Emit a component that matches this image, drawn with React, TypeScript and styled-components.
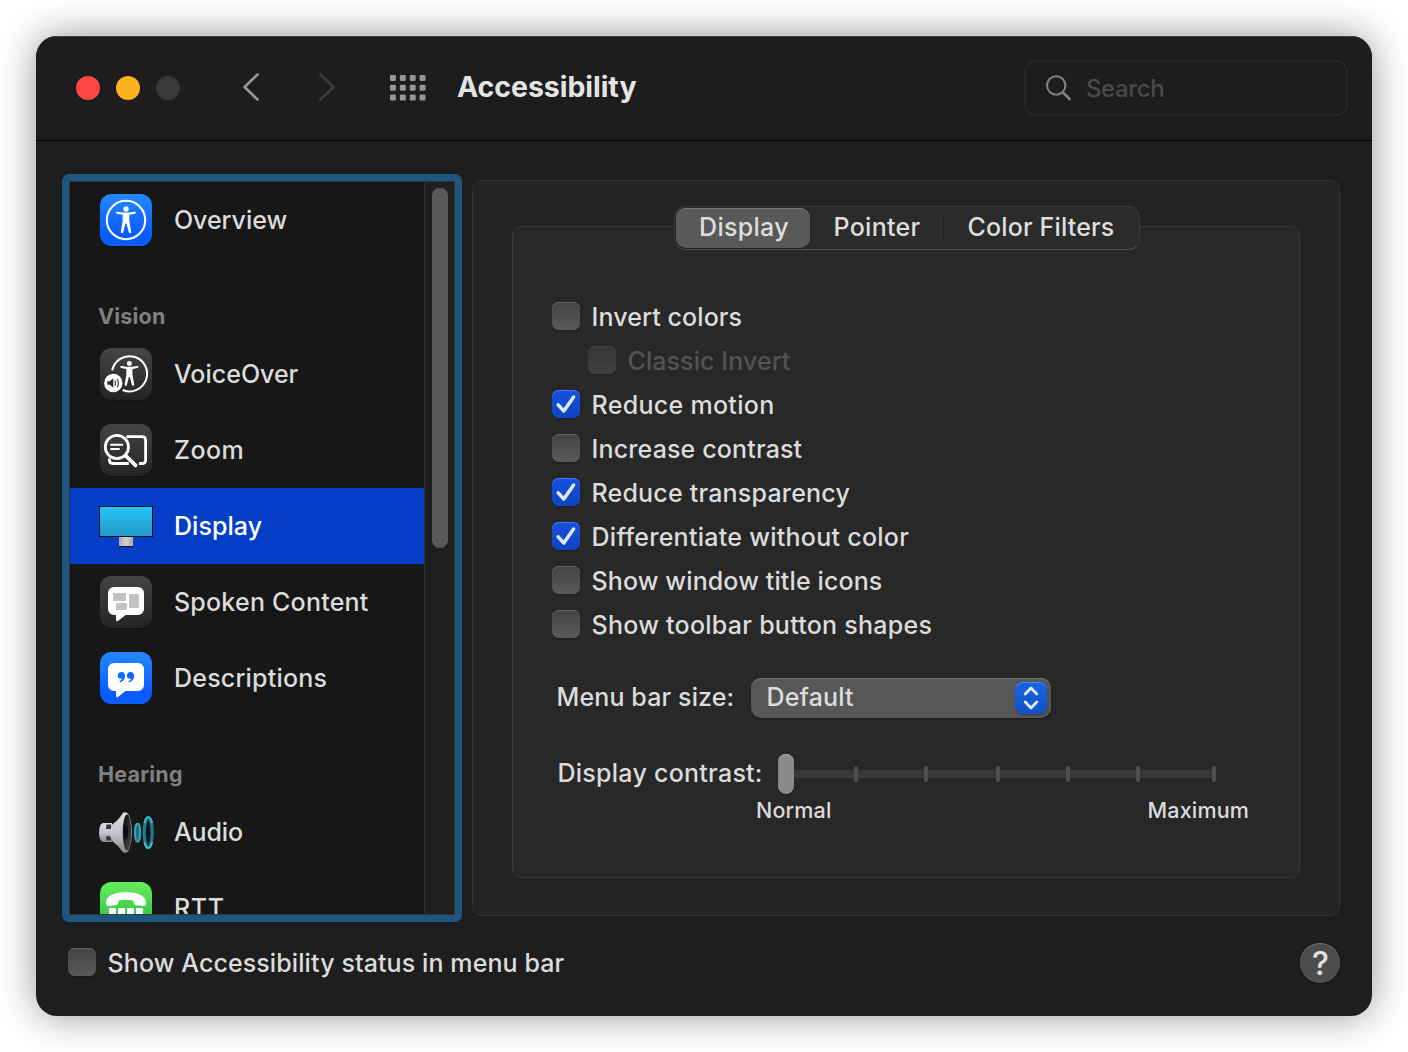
import React, { useState } from "react";
import styled, { createGlobalStyle, css } from "styled-components";

const Global = createGlobalStyle`
  * { box-sizing: border-box; }
  body { margin: 0; background: #fff; }
`;

const Desktop = styled.div`
  width: 1408px;
  height: 1052px;
  padding: 36px;
  overflow: hidden;
  background: #fff;
  font-family: Inter, "Liberation Sans", sans-serif;
  font-size: 25px;
  font-weight: 460;
  line-height: 30px;
  color: #dcdcdc;
`;

const Window = styled.main`
  display: flex;
  flex-direction: column;
  height: 980px;
  border-radius: 21px;
  overflow: hidden;
  background: #1e1e1e;
`;

const WindowShadow = styled.div`
  border-radius: 21px;
  box-shadow: 0 0 38px rgba(0, 0, 0, 0.42);
`;

/* ---------- toolbar ---------- */

const Toolbar = styled.header`
  display: flex;
  align-items: center;
  flex: none;
  height: 105px;
  padding: 0 24px 1px 40px;
  border-bottom: 1px solid #000;
  box-shadow: inset 0 1px 0 #404040;
  background: #1d1d1d;
`;

const Lights = styled.div`
  display: flex;
  gap: 16px;
`;

const Light = styled.span<{ $color: string }>`
  width: 24px;
  height: 24px;
  border-radius: 50%;
  background: ${(p) => p.$color};
`;

const NavButtons = styled.nav`
  display: flex;
  gap: 60px;
  margin: 0 55px 2px 63px;
`;

const Icon = styled.svg`
  display: block;
  flex: none;
  overflow: visible;
`;

const Title = styled.h1`
  flex: 1;
  margin: 0 0 1px 31px;
  font-size: 28.5px;
  font-weight: 700;
  letter-spacing: -0.05px;
  color: #e4e4e4;
`;

const SearchBox = styled.label`
  display: flex;
  align-items: center;
  gap: 15px;
  width: 324px;
  height: 56px;
  padding-left: 20px;
  border: 2px solid #272727;
  border-radius: 12px;
  font-size: 24px;
  letter-spacing: -0.4px;
  color: #4a4a4a;
`;

const SearchText = styled.span`
  padding-top: 3px;
`;

/* ---------- body ---------- */

const Body = styled.div`
  display: flex;
  gap: 10px;
  padding: 33px 32px 0 26px;
`;

const Sidebar = styled.aside`
  display: flex;
  width: 400px;
  height: 748px;
  border: 7px solid #1d5780;
  border-radius: 7px;
  background: #171717;
  box-shadow: inset 0 0 0 1px #333638;
  overflow: hidden;
`;

const List = styled.div`
  flex: 1;
  margin: 1px 0 1px 1px;
  overflow: hidden;
`;

const ScrollTrack = styled.div`
  width: 31px;
  margin: 1px 0;
  padding: 6px 0 0 7px;
  border-left: 1px solid #323232;
  border-right: 1px solid #333638;
  background: #202020;
`;

const ScrollThumb = styled.div`
  width: 16px;
  height: 360px;
  border-radius: 8px;
  background: #595959;
`;

const Section = styled.h2`
  display: flex;
  align-items: center;
  height: 78px;
  margin: 0;
  padding: 38px 0 0 28px;
  font-size: 21.5px;
  line-height: 40px;
  font-weight: 680;
  letter-spacing: 0.2px;
  color: #808080;
`;

const Item = styled.div<{ $selected: boolean }>`
  display: flex;
  align-items: center;
  gap: 22px;
  height: 76px;
  padding-left: 30px;
  cursor: default;
  ${(p) =>
    p.$selected &&
    css`
      background: #063fc7;
      color: #fff;
    `}
`;

const Text = styled.span<{ $track?: number }>`
  white-space: pre;
  letter-spacing: ${(p) => p.$track ?? 0.2}px;
`;

/* ---------- settings pane ---------- */

const Pane = styled.section`
  flex: 1;
  height: 736px;
  margin-top: 6px;
  padding: 45px 39px 0;
  border: 1px solid #333;
  border-width: 1.5px 1px;
  border-radius: 9px;
  background: #232323;
`;

const Group = styled.div`
  display: flex;
  flex-direction: column;
  height: 652px;
  padding-left: 39px;
  border: 1px solid #393939;
  border-radius: 9px;
  background: #282828;
`;

const Tabs = styled.div`
  display: flex;
  align-items: center;
  width: 466px;
  height: 44px;
  margin: -21px 0 0 122px;
  padding-left: 1px;
  border: 1px solid #3a3a3a;
  border-bottom-color: #505050;
  border-radius: 12px;
  background: #2b2b2b;
`;

const Tab = styled.button<{ $active: boolean; $width: number; $nudge: number }>`
  width: ${(p) => p.$width}px;
  height: 40px;
  padding: 0 0 3px ${(p) => p.$nudge}px;
  border: 0;
  border-radius: 10px;
  background: ${(p) => (p.$active ? "#595959" : "transparent")};
  box-shadow: ${(p) => (p.$active ? "inset 0 1px 0 #757575, 0 1px 2px rgba(0,0,0,.35)" : "none")};
  font: inherit;
  color: #dedede;
`;

const TabDivider = styled.span`
  width: 1px;
  height: 24px;
  background: #222;
`;

const Checks = styled.div`
  display: flex;
  flex-direction: column;
  gap: 16px;
  margin-top: 52px;
`;

const CheckRow = styled.label<{ $indent?: boolean; $disabled?: boolean }>`
  display: flex;
  align-items: center;
  gap: 11.5px;
  height: 28px;
  margin-left: ${(p) => (p.$indent ? 36 : 0)}px;
  color: ${(p) => (p.$disabled ? "#535353" : "inherit")};
`;

const CheckLabel = styled.span`
  padding-top: 2px;
`;

const boxLook = {
  off: css`
    background: linear-gradient(#434343, #5a5a5a);
    box-shadow: inset 0 1px 0 #636363, 0 1px 2px rgba(0, 0, 0, 0.35);
  `,
  dim: css`
    background: linear-gradient(#353535, #404040);
    box-shadow: inset 0 1px 0 #414141, 0 1px 1px rgba(0, 0, 0, 0.2);
  `,
  on: css`
    background: linear-gradient(#1651e2, #1043c0);
    box-shadow: inset 0 1px 0 #4a78e8, 0 1px 2px rgba(0, 0, 0, 0.35);
  `,
};

const Box = styled.span<{ $look: keyof typeof boxLook }>`
  flex: none;
  width: 28px;
  height: 28px;
  border-radius: 6.5px;
  ${(p) => boxLook[p.$look]}
`;

const MenuRow = styled.div`
  display: flex;
  align-items: center;
  height: 40px;
  margin: 40px 0 0 4.5px;
`;

const Select = styled.div`
  display: flex;
  align-items: center;
  justify-content: space-between;
  width: 300px;
  height: 40px;
  margin-left: auto;
  margin-right: 248px;
  padding: 0 4px 0 15.5px;
  border-radius: 10px;
  background: #575757;
  box-shadow: inset 0 1px 0 #747474, 0 1px 2px rgba(0, 0, 0, 0.4);
`;

const Raised = styled.span`
  padding-bottom: 3px;
`;

const Stepper = styled.span`
  display: flex;
  align-items: center;
  justify-content: center;
  width: 32px;
  height: 32px;
  border-radius: 8px;
  background: linear-gradient(#1766e4, #1052c4);
  box-shadow: inset 0 1px 0 #4c8bee, 0 1px 2px rgba(0, 0, 0, 0.35);
`;

const SliderRow = styled.div`
  display: flex;
  align-items: center;
  height: 40px;
  margin: 36px 0 0 5.5px;
`;

const Slider = styled.div`
  display: flex;
  align-items: center;
  margin-left: auto;
  margin-right: 83px;
`;

const Thumb = styled.span`
  width: 16px;
  height: 40px;
  border-radius: 8px;
  background: #8b8b8b;
  box-shadow: inset 0 1px 0 #a3a3a3, 0 1px 2px rgba(0, 0, 0, 0.3);
`;

const Segment = styled.span<{ $width: number }>`
  display: flex;
  align-items: center;
  justify-content: flex-end;
  width: ${(p) => p.$width}px;
  height: 8px;
  background: #393939;
`;

const Tick = styled.span`
  flex: none;
  width: 4px;
  height: 16px;
  border-radius: 2px;
  background: #4e4e4e;
`;

const Captions = styled.div`
  display: flex;
  justify-content: space-between;
  margin: 1px 50px 0 204px;
  font-size: 21.5px;
`;

/* ---------- footer ---------- */

const Footer = styled.footer`
  display: flex;
  align-items: center;
  justify-content: space-between;
  padding: 21px 32px 0;
`;

const FooterOption = styled.div`
  padding-bottom: 2px;
`;

const Help = styled.button`
  width: 40px;
  height: 40px;
  padding: 1px 0 0 1px;
  border: 0;
  border-radius: 50%;
  background: #4d4d4d;
  box-shadow: inset 0 1px 0 #6a6a6a, 0 1px 2px rgba(0, 0, 0, 0.4);
  font: 480 32px/39px Inter, sans-serif;
  color: #e2e2e2;
`;

/* ---------- icons ---------- */

const Person = () => (
  <g fill="#fff">
    <circle cx="0" cy="-11" r="2.7" />
    <path d="M-10 -7.9 Q-10 -6.6 -8.8 -6.3 L-3.3 -5.2 V0.5 L-5.2 12 Q-5.2 13 -4.2 13.2 Q-3.1 13.3 -2.8 12.3 L-0.5 3.6 H0.5 L2.8 12.3 Q3.1 13.3 4.2 13.2 Q5.2 13 5.2 12 L3.3 0.5 V-5.2 L8.8 -6.3 Q10 -6.6 10 -7.9 Q9.8 -8.4 9 -8.3 L3 -7.5 H-3 L-9 -8.3 Q-9.8 -8.4 -10 -7.9 Z" />
  </g>
);

const tileColors = {
  blue: ["#2489ff", "#0b5cff"],
  gray: ["#444546", "#222425"],
  green: ["#67ee5c", "#22b43c"],
};

const Tile = ({ tone, children }: { tone: keyof typeof tileColors; children: React.ReactNode }) => (
  <Icon width="52" height="52" viewBox="0 0 52 52">
    <defs>
      <linearGradient id={`tile-${tone}`} x1="0" y1="0" x2="0" y2="1">
        <stop offset="0" stopColor={tileColors[tone][0]} />
        <stop offset={tone === "blue" ? 0.75 : 1} stopColor={tileColors[tone][1]} />
      </linearGradient>
    </defs>
    <rect y="1" width="52" height="52" rx="11.5" fill="#000" opacity="0.25" />
    <rect width="52" height="52" rx="11.5" fill={`url(#tile-${tone})`} />
    {children}
  </Icon>
);

const bubble =
  "M14 11 H38 A6 6 0 0 1 44 17 V33 A6 6 0 0 1 38 39 H25.5 L18 44.9 Q16 45.9 16 43.6 V39 H14 A6 6 0 0 1 8 33 V17 A6 6 0 0 1 14 11 Z";

const OverviewIcon = () => (
  <Tile tone="blue">
    <circle cx="26" cy="26" r="19.2" fill="none" stroke="#fff" strokeWidth="2.1" />
    <g transform="translate(26 26)"><Person /></g>
  </Tile>
);

const VoiceOverIcon = () => (
  <Tile tone="gray">
    <path d="M12.2 22.5 A17.6 17.6 0 1 1 22.6 42" fill="none" stroke="#fff" strokeWidth="2" />
    <g transform="translate(29.4 25.7) scale(.92)"><Person /></g>
    <circle cx="13.3" cy="35" r="9.2" fill="#fff" />
    <path d="M7.3 33.3 H9.7 L13.3 30.2 V39.8 L9.7 36.7 H7.3 Z" fill="#2c2d2e" />
    <path d="M15 32.8 Q16.2 35 15 37.2 M17.3 31.2 Q19.5 35 17.3 38.8" fill="none" stroke="#2c2d2e" strokeWidth="1.1" strokeLinecap="round" />
  </Tile>
);

const ZoomIcon = () => (
  <Tile tone="gray">
    <g fill="none" stroke="#fff" strokeWidth="2.8">
      <circle cx="16.9" cy="23" r="11.6" />
      <path d="M26.5 12.6 H42 Q45.6 12.6 45.6 16.2 V35.9 Q45.6 39.5 42 39.5 H39" />
      <path d="M9.4 34.6 V36 Q9.4 39.5 13 39.5 H28.8" />
      <path d="M26 32 L35.6 41.4" strokeWidth="3.8" strokeLinecap="round" />
      <path d="M11 20.7 H22.3 M11 25 H19" strokeWidth="1.9" strokeLinecap="round" />
    </g>
  </Tile>
);

const DisplayIcon = () => (
  <Icon width="52" height="52" viewBox="0 0 52 52">
    <defs>
      <linearGradient id="screen" x1="0" y1="0" x2="0" y2="1">
        <stop offset="0" stopColor="#27c4fb" />
        <stop offset="1" stopColor="#2398c4" />
      </linearGradient>
      <linearGradient id="stand" x1="0" y1="0" x2="1" y2="0">
        <stop offset="0" stopColor="#a9a9ad" />
        <stop offset=".5" stopColor="#d3d3d6" />
        <stop offset="1" stopColor="#a9a9ad" />
      </linearGradient>
    </defs>
    <rect x="19" y="36" width="14" height="10.6" fill="url(#stand)" />
    <rect x="19" y="46" width="14" height="1" fill="#15161c" />
    <rect x="-0.5" y="6.5" width="53" height="30" fill="url(#screen)" stroke="#04101c" />
  </Icon>
);

const SpokenIcon = () => (
  <Tile tone="gray">
    <path d={bubble} fill="#fff" />
    <g fill="#c2c2c2">
      <rect x="13" y="17" width="13" height="8" rx="1.2" />
      <rect x="29" y="18" width="10" height="14" rx="1.2" />
      <rect x="16" y="27" width="11" height="7" rx="1.2" />
    </g>
  </Tile>
);

const quote = "M0 -4 Q3.7 -3.8 3.7 0.3 Q3.5 4.8 -1.2 6.3 Q-2.4 6.2 -1.6 5.1 Q0.6 4 0.9 2.6 Q-3.5 3.6 -3.6 -0.4 Q-3.4 -3.8 0 -4 Z";

const DescriptionsIcon = () => (
  <Tile tone="blue">
    <path d={bubble} fill="#fff" />
    <path d={quote} transform="translate(21.4 24)" fill="#1467ff" />
    <path d={quote} transform="translate(30.5 24)" fill="#1467ff" />
  </Tile>
);

const AudioIcon = () => (
  <Icon width="52" height="52" viewBox="0 0 52 52">
    <defs>
      <linearGradient id="metal" x1="0" y1="0" x2="0" y2="1">
        <stop offset="0" stopColor="#dedee2" />
        <stop offset=".5" stopColor="#c6c6ca" />
        <stop offset="1" stopColor="#8b8b8f" />
      </linearGradient>
      <linearGradient id="cone" x1="0" y1="0" x2="1" y2="1">
        <stop offset="0" stopColor="#090909" />
        <stop offset="1" stopColor="#4c4c4c" />
      </linearGradient>
    </defs>
    <path d="M2.8 17 H12 V36 H2.8 Q-0.9 34.5 -0.9 26.5 Q-0.9 18.5 2.8 17 Z" fill="url(#metal)" />
    <path d="M6.4 18.6 H11.2 V23 H6 Z M6 30.2 H10.5 L11.4 34.6 H6.4 Z" fill="#34363a" />
    <path d="M12.2 18.5 Q18.5 14.5 23.2 6.6 H25 V46.6 H23.2 Q18.5 39.5 12.2 35 Q10.2 32 10.2 26.7 Q10.2 21.5 12.2 18.5 Z" fill="url(#metal)" />
    <ellipse cx="25.6" cy="26.6" rx="6.2" ry="20.2" fill="url(#metal)" />
    <ellipse cx="27" cy="26.6" rx="4.3" ry="18" fill="url(#cone)" />
    <ellipse cx="26" cy="26.6" rx="2.2" ry="7.2" fill="#0d0d0d" />
    <ellipse cx="37.6" cy="26.6" rx="2.7" ry="9.2" fill="#1f6f83" stroke="#37a6c0" strokeWidth="1.8" />
    <ellipse cx="48.2" cy="26.6" rx="4" ry="15" fill="#121819" stroke="#27798c" strokeWidth="3.2" />
    <path d="M44.4 17 Q45.6 11 48.3 11 Q51 11 52.2 17 M44.4 36 Q45.6 42 48.3 42 Q51 42 52.2 36" fill="none" stroke="#45c4df" strokeWidth="1.6" />
  </Icon>
);

const RttIcon = () => (
  <Tile tone="green">
    <path d="M26 10 C37 10 46 13.5 46 20.5 Q46 24 43.5 24 L36 23.2 Q33.8 22.8 33.8 20.6 V18.8 Q26 16.8 18.2 18.8 V20.6 Q18.2 22.8 16 23.2 L8.5 24 Q6 24 6 20.5 C6 13.5 15 10 26 10 Z" fill="#fff" />
    {[26, 35].map((y) =>
      [9, 18, 27, 36].map((x) => <rect key={`${x}-${y}`} x={x} y={y} width="7" height="7" rx="1" fill="#fff" />)
    )}
  </Tile>
);

const Tickmark = () => (
  <Icon width="28" height="28" viewBox="0 0 28 28">
    <path d="M6.2 14.8 L11.8 21 L21.6 7" fill="none" stroke="#dfe8fb" strokeWidth="3.5" strokeLinecap="round" strokeLinejoin="round" />
  </Icon>
);

/* ---------- data ---------- */

type Row =
  | { section: string }
  | { name: string; icon: () => React.JSX.Element; track?: number };

const rows: Row[] = [
  { name: "Overview", icon: OverviewIcon, track: -0.05 },
  { section: "Vision" },
  { name: "VoiceOver", icon: VoiceOverIcon, track: 0 },
  { name: "Zoom", icon: ZoomIcon, track: 0.45 },
  { name: "Display", icon: DisplayIcon, track: 0.05 },
  { name: "Spoken Content", icon: SpokenIcon, track: 0.22 },
  { name: "Descriptions", icon: DescriptionsIcon, track: 0.2 },
  { section: "Hearing" },
  { name: "Audio", icon: AudioIcon, track: -0.15 },
  { name: "RTT", icon: RttIcon, track: 0.6 },
];

const options = [
  { label: "Invert colors", on: false, track: 0.1 },
  { label: "Classic Invert", on: false, nested: true, track: 0.08 },
  { label: "Reduce motion", on: true, track: 0.3 },
  { label: "Increase contrast", on: false, track: 0.15 },
  { label: "Reduce transparency", on: true, track: 0.2 },
  { label: "Differentiate without color", on: true, track: 0.27 },
  { label: "Show window title icons", on: false, track: 0.12 },
  { label: "Show toolbar button shapes", on: false, track: 0.26 },
];

const tabs = [
  { name: "Display", width: 134, track: 0.3, nudge: 2 },
  { name: "Pointer", width: 133, track: 0.3, nudge: 1 },
  { name: "Color Filters", width: 194, track: 0.15, nudge: 0 },
];

const segments = [64, 70, 72, 70, 70, 76];

export default function App() {
  const [tab, setTab] = useState("Display");
  return (
    <Desktop>
      <Global />
      <WindowShadow>
        <Window>
          <Toolbar>
            <Lights>
              <Light $color="#ff4845" />
              <Light $color="#fdb024" />
              <Light $color="#393939" />
            </Lights>
            <NavButtons>
              <Icon width="16" height="28" viewBox="0 0 16 28" fill="none" stroke="#979797" strokeWidth="2.7" strokeLinecap="round" strokeLinejoin="round">
                <path d="M14.6 1.4 L1.6 14 L14.6 26.6" />
              </Icon>
              <Icon width="16" height="28" viewBox="0 0 16 28" fill="none" stroke="#3c3c3c" strokeWidth="2.7" strokeLinecap="round" strokeLinejoin="round">
                <path d="M1.4 1.4 L14.4 14 L1.4 26.6" />
              </Icon>
            </NavButtons>
            <Icon width="36" height="26" viewBox="0 0 36 26" fill="#979797">
              {[0, 9.8, 19.6].map((y) => [0, 9.9, 19.8, 29.6].map((x) => <rect key={`${x}-${y}`} x={x} y={y} width="5.9" height="5.9" rx="1.1" />))}
            </Icon>
            <Title>Accessibility</Title>
            <SearchBox>
              <Icon width="25" height="25" viewBox="0 0 25 25" fill="none" stroke="#828282" strokeLinecap="round">
                <circle cx="10.2" cy="10.5" r="9.2" strokeWidth="2" />
                <path d="M17 17.5 L23.6 24" strokeWidth="2.6" />
              </Icon>
              <SearchText>Search</SearchText>
            </SearchBox>
          </Toolbar>

          <Body>
            <Sidebar>
              <List>
                {rows.map((row) =>
                  "section" in row ? (
                    <Section key={row.section}>{row.section}</Section>
                  ) : (
                    <Item key={row.name} $selected={row.name === "Display"}>
                      <row.icon />
                      <Text $track={row.track}>{row.name}</Text>
                    </Item>
                  )
                )}
              </List>
              <ScrollTrack>
                <ScrollThumb />
              </ScrollTrack>
            </Sidebar>

            <Pane>
              <Group>
                <Tabs>
                  {tabs.map((t, i) => (
                    <React.Fragment key={t.name}>
                      {i === 2 && <TabDivider />}
                      <Tab $active={tab === t.name} $width={t.width} $nudge={t.nudge} onClick={() => setTab(t.name)}>
                        <Text $track={t.track}>{t.name}</Text>
                      </Tab>
                    </React.Fragment>
                  ))}
                </Tabs>

                <Checks>
                  {options.map((o) => (
                    <CheckRow key={o.label} $indent={o.nested} $disabled={o.nested}>
                      <Box $look={o.nested ? "dim" : o.on ? "on" : "off"}>{o.on && <Tickmark />}</Box>
                      <CheckLabel><Text $track={o.track}>{o.label}</Text></CheckLabel>
                    </CheckRow>
                  ))}
                </Checks>

                <MenuRow>
                  <Raised><Text $track={0.12}>Menu bar size:</Text></Raised>
                  <Select>
                    <Raised><Text $track={0.15}>Default</Text></Raised>
                    <Stepper>
                      <Icon width="16" height="24" viewBox="0 0 16 24" fill="none" stroke="#e3ecfb" strokeWidth="2.8" strokeLinecap="round" strokeLinejoin="round">
                        <path d="M2.2 8 L8 2 L13.8 8 M2.2 16 L8 22 L13.8 16" />
                      </Icon>
                    </Stepper>
                  </Select>
                </MenuRow>

                <SliderRow>
                  <Raised><Text $track={0.26}>Display contrast:</Text></Raised>
                  <Slider>
                    <Thumb />
                    {segments.map((w, i) => (
                      <Segment key={i} $width={w}><Tick /></Segment>
                    ))}
                  </Slider>
                </SliderRow>
                <Captions>
                  <Text $track={0.15}>Normal</Text>
                  <Text $track={0.15}>Maximum</Text>
                </Captions>
              </Group>
            </Pane>
          </Body>

          <Footer>
            <FooterOption>
              <CheckRow>
                <Box $look="off" />
                <CheckLabel><Text $track={0.1}>Show Accessibility status in menu bar</Text></CheckLabel>
              </CheckRow>
            </FooterOption>
            <Help>?</Help>
          </Footer>
        </Window>
      </WindowShadow>
    </Desktop>
  );
}
